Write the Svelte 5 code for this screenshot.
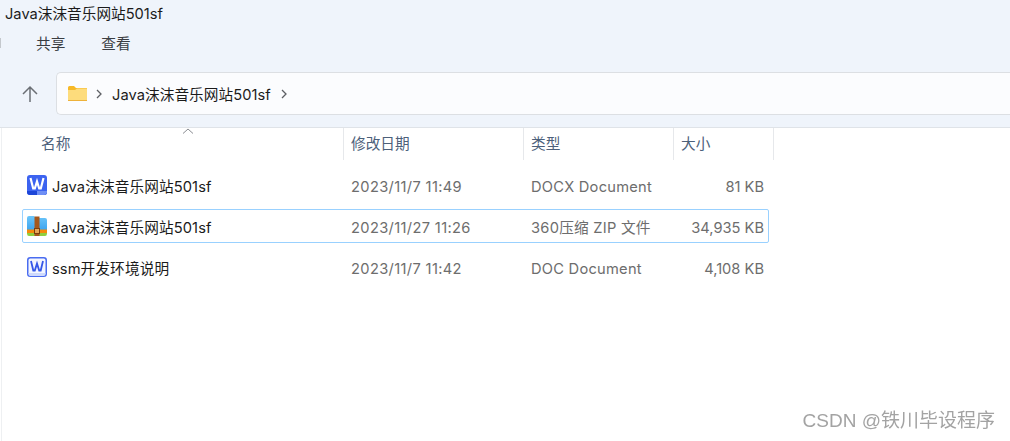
<script>
	const files = [
		{ name: 'Java沫沫音乐网站501sf', date: '2023/11/7 11:49', type: 'DOCX Document', size: '81 KB', icon: 'docx' },
		{ name: 'Java沫沫音乐网站501sf', date: '2023/11/27 11:26', type: '360压缩 ZIP 文件', size: '34,935 KB', icon: 'zip', selected: true },
		{ name: 'ssm开发环境说明', date: '2023/11/7 11:42', type: 'DOC Document', size: '4,108 KB', icon: 'doc' }
	]
</script>

<div class="window">
	<header class="top">
		<div class="title">Java沫沫音乐网站501sf</div>
		<nav class="menu">
			<i class="cut"></i>
			<span>共享</span>
			<span>查看</span>
		</nav>
		<div class="pathbar">
			<svg class="up" width="18" height="18" viewBox="0 0 18 18" fill="none" stroke="#6b6f75" stroke-width="1.5">
				<path d="M9 17V2M2 9l7-7 7 7" />
			</svg>
			<div class="address">
				<svg width="19" height="15" viewBox="0 0 19 15">
					<path d="M0 1.500Q0 0 1.500 0H6l2 2h11v13H1Q0 15 0 14z" fill="#f7b928" />
					<path d="M0 4h7l2-1.500h10V15H0z" fill="#fddc7c" />
					<path d="M0 14h19v1H0z" fill="#eeb23a" />
				</svg>
				<svg class="chev" width="6" height="10" viewBox="0 0 6 10" fill="none" stroke="#5c5f64" stroke-width="1.300">
					<path d="M1 1l4 4-4 4" />
				</svg>
				<span class="crumb">Java沫沫音乐网站501sf</span>
				<svg class="chev" width="6" height="10" viewBox="0 0 6 10" fill="none" stroke="#5c5f64" stroke-width="1.300">
					<path d="M1 1l4 4-4 4" />
				</svg>
			</div>
		</div>
	</header>

	<section class="list">
		<div class="columns">
			<div class="col name">
				名称
				<svg class="sort" width="12" height="6" viewBox="0 0 12 6" fill="none" stroke="#8a8d92">
					<path d="M1 5.500L6 1l5 4.500" />
				</svg>
			</div>
			<div class="col date">修改日期</div>
			<div class="col type">类型</div>
			<div class="col size">大小</div>
		</div>

		{#each files as file}
			<div class="row" class:selected={file.selected}>
				<div class="cell-name">
					{#if file.icon === 'docx'}
						<svg width="20" height="20" viewBox="0 0 20 20">
							<rect width="20" height="20" rx="3" fill="#3c63f0" />
							<path d="M0 16h20v1a3 3 0 0 1-3 3H3a3 3 0 0 1-3-3z" fill="#1d46d8" />
							<path d="M10 16h10v1a3 3 0 0 1-3 3h-7z" fill="#6f8ff5" />
							<path d="M3.500 3l2.700 10.500h1.600L10 6.500l2.200 7h1.600L16.500 3" fill="none" stroke="#fff" stroke-width="2.200" />
						</svg>
					{:else if file.icon === 'zip'}
						<svg width="20" height="20" viewBox="0 0 20 20">
							<defs>
								<linearGradient id="zipblue" x1="0" y1="0" x2="0" y2="1">
									<stop offset="0" stop-color="#6cc6fa" />
									<stop offset="1" stop-color="#3aa2ee" />
								</linearGradient>
							</defs>
							<path d="M0 2q0-2 2-2h5l2 2h9q2 0 2 2v11H0z" fill="url(#zipblue)" />
							<path d="M0 13.500h20V17H0z" fill="#f58a0b" />
							<path d="M0 17h20v.500q0 2.500-2 2.500H2q-2 0-2-2.500z" fill="#8fcf3f" />
							<path d="M7.500 0.500h5V20h-5z" fill="#a5571c" />
							<rect x="7.500" y="12.500" width="5" height="5" fill="#e5a758" stroke="#7a3d10" />
						</svg>
					{:else}
						<svg width="20" height="20" viewBox="0 0 20 20">
							<rect x="0.750" y="0.750" width="18.500" height="18.500" rx="2.500" fill="#f3f6ff" stroke="#4a6cf0" stroke-width="1.500" />
							<path d="M1.500 16h17v1a2 2 0 0 1-2 2h-13a2 2 0 0 1-2-2z" fill="#cfdafc" />
							<path d="M4 4l2.300 9.500h1.500L10 6.500l2.200 7h1.500L16 4" fill="none" stroke="#3557e8" stroke-width="1.800" />
						</svg>
					{/if}
					<span class="fname">{file.name}</span>
				</div>
				<div class="cell-date">{file.date}</div>
				<div class="cell-type">{file.type}</div>
				<div class="cell-size">{file.size}</div>
			</div>
		{/each}
	</section>

	<div class="mark">CSDN @铁川毕设程序</div>
</div>

<style>
	:global(body) {
		margin: 0;
	}

	.window {
		position: relative;
		width: 1010px;
		height: 441px;
		overflow: hidden;
		background: #fff;
		font-family: 'Inter', 'Noto Sans CJK SC', sans-serif;
		font-size: 14.67px;
		color: #1b1b1b;
	}

	.top {
		height: 128px;
		box-sizing: border-box;
		background: #eff4fb;
		border-bottom: 1px solid #dfe3e8;
		padding-top: 4px;
	}

	.title {
		padding-left: 5px;
		line-height: 20px;
	}

	.menu {
		position: relative;
		display: flex;
		gap: 36px;
		padding-left: 36px;
		margin-top: 10px;
		line-height: 20px;
		color: #3a3d42;
	}

	.cut {
		position: absolute;
		left: 0;
		top: 4px;
		width: 1px;
		height: 10px;
		background: #c4c8cd;
	}

	.pathbar {
		display: flex;
		align-items: center;
		margin-top: 18px;
	}

	.up {
		margin: 0 17px 0 21px;
	}

	.address {
		flex: 1;
		height: 43px;
		box-sizing: border-box;
		display: flex;
		align-items: center;
		padding-left: 11px;
		background: #fbfcfe;
		border: 1px solid #dcdfe3;
		border-right: 0;
		border-radius: 5px 0 0 5px;
	}

	.chev {
		margin-left: 9px;
	}

	.crumb {
		margin-left: 10px;
		letter-spacing: 0.05px;
	}

	.address .crumb + .chev {
		margin-left: 10px;
	}

	.list {
		border-left: 1px solid #eef0f2;
		margin-left: 1px;
		height: 313px;
	}

	.columns {
		display: grid;
		grid-template-columns: 342px 180px 150px 100px;
		height: 32px;
	}

	.col {
		position: relative;
		border-right: 1px solid #e6e8eb;
		line-height: 32px;
		padding-left: 7px;
		color: #4c607a;
	}

	.col.name {
		padding-left: 39px;
	}

	.sort {
		position: absolute;
		left: 180px;
		top: 0;
	}

	.row {
		display: grid;
		grid-template-columns: 321px 180px 150px 94px;
		align-items: center;
		height: 34px;
		width: 747px;
		box-sizing: border-box;
		margin: 7px 0 0 20px;
		border: 1px solid transparent;
		border-radius: 2px;
		line-height: 20px;
		color: #6d6d6d;
	}

	.columns + .row {
		margin-top: 8px;
	}

	.row.selected {
		border-color: #99d1ff;
	}

	.cell-name {
		display: flex;
		align-items: center;
		gap: 5px;
		padding-left: 4px;
	}

	.fname {
		color: #1b1b1b;
		letter-spacing: 0.1px;
		padding-top: 3px;
	}

	.cell-date,
	.cell-type,
	.cell-size {
		padding-top: 3px;
	}

	.cell-date {
		letter-spacing: 0.35px;
		padding-left: 7px;
	}

	.cell-type {
		letter-spacing: 0.25px;
		padding-left: 7px;
	}

	.cell-size {
		text-align: right;
		padding-right: 4px;
	}

	.mark {
		position: absolute;
		right: 15px;
		top: 411px;
		font-family: 'Liberation Sans', 'Noto Sans CJK SC', sans-serif;
		font-size: 19px;
		line-height: 20px;
		color: #a3a3a3;
		filter: blur(0.3px);
	}
</style>
